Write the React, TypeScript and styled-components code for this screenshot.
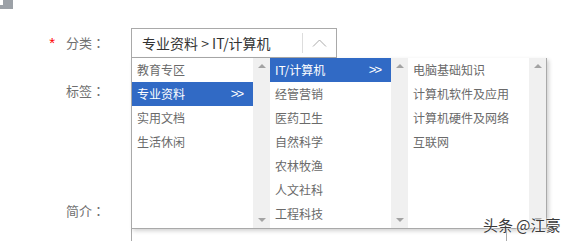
import React from "react";
import styled, { createGlobalStyle } from "styled-components";

const Global = createGlobalStyle`
  html, body { margin: 0; padding: 0; background: #fff; }
  body { font-family: "Noto Sans CJK SC", "Liberation Sans", sans-serif; overflow: hidden; }
  * { box-sizing: border-box; }
`;

const Page = styled.div`
  position: relative;
  width: 564px;
  height: 241px;
  overflow: hidden;
`;

const Header = styled.div`
  height: 9px;
  display: flex;
`;

const Form = styled.div`
  display: flex;
  flex-direction: column;
  gap: 18px;
  margin-top: 19px;
`;

const Row = styled.div`
  display: flex;
  align-items: center;
`;

const Label = styled.div`
  width: 131px;
  padding-right: 26px;
  display: flex;
  justify-content: flex-end;
  align-items: center;
  font-size: 13px;
  line-height: 16px;
  color: #6f6f6f;
`;

const Colon = styled.span`
  font-family: "Noto Sans CJK JP", sans-serif;
`;

const Star = styled.span`
  color: #f00;
  font-family: "Liberation Sans", sans-serif;
  font-size: 15px;
  margin-right: 11px;
  line-height: 16px;
`;

const Field = styled.div`
  position: relative;
`;

const SelectBox = styled.div`
  width: 206px;
  height: 30px;
  border: 1px solid #a9a9a9;
  display: flex;
  align-items: center;
  background: #fff;
`;

const SelectText = styled.div`
  flex: 1;
  padding-left: 10px;
  font-size: 14px;
  color: #333;
  line-height: 18px;
  white-space: nowrap;
`;

const Divider = styled.div`
  width: 1px;
  height: 20px;
  background: #ddd;
`;

const Chevron = styled.div`
  width: 33px;
  display: flex;
  justify-content: center;
  align-items: center;
`;

const Dropdown = styled.div`
  position: absolute;
  left: 0;
  top: 100%;
  z-index: 5;
  display: flex;
  width: 416px;
  height: 171px;
  background: #fff;
  border: 1px solid #a9a9a9;
  border-top: none;
  box-shadow: 2px 2px 4px rgba(0, 0, 0, 0.18);
`;

const Column = styled.div`
  width: 138px;
  display: flex;
`;

const List = styled.div`
  width: 121px;
  display: flex;
  flex-direction: column;
`;

const Item = styled.div<{ $active?: boolean }>`
  height: 24px;
  padding: 0 9px 0 5px;
  display: flex;
  align-items: center;
  justify-content: space-between;
  font-size: 12px;
  line-height: 16px;
  white-space: nowrap;
  color: ${(p) => (p.$active ? "#fff" : "#6a6a6a")};
  background: ${(p) => (p.$active ? "#316ac5" : "transparent")};
`;

const Arrows = styled.span`
  font-family: "Liberation Sans", sans-serif;
  font-size: 13px;
  letter-spacing: -2px;
  padding-right: 2px;
`;

const Scrollbar = styled.div`
  width: 17px;
  background: #f0f0f0;
  display: flex;
  flex-direction: column;
  justify-content: space-between;
  align-items: center;
  padding: 6px 0 6px;
`;

const Tri = styled.div<{ $down?: boolean }>`
  width: 0;
  height: 0;
  border-left: 4px solid transparent;
  border-right: 4px solid transparent;
  ${(p) =>
    p.$down
      ? "border-top: 4px solid #a3a3a3;"
      : "border-bottom: 4px solid #a3a3a3;"}
`;

const Input = styled.div`
  width: 376px;
  height: 30px;
  border: 1px solid #a9a9a9;
`;

const TextArea = styled.div`
  width: 376px;
  height: 174px;
  border: 1px solid #a9a9a9;
`;

const Watermark = styled.div`
  position: absolute;
  left: 483px;
  top: 215px;
  font-size: 15px;
  line-height: 20px;
  color: #3a3a3a;
  white-space: nowrap;
  text-shadow: 0 0 2px #fff, 0 0 2px #fff;
  z-index: 10;
`;

type Col = { items: string[]; active?: number };

const columns: Col[] = [
  { items: ["教育专区", "专业资料", "实用文档", "生活休闲"], active: 1 },
  {
    items: ["IT/计算机", "经管营销", "医药卫生", "自然科学", "农林牧渔", "人文社科", "工程科技"],
    active: 0,
  },
  { items: ["电脑基础知识", "计算机软件及应用", "计算机硬件及网络", "互联网"] },
];

export default function App() {
  return (
    <Page>
      <Global />
      <Header>
        <svg width="13" height="9" viewBox="0 0 13 9">
          <rect x="0" y="0" width="13" height="9" fill="#9ca1a7" />
          <rect x="0" y="0" width="3" height="5" fill="#fff" />
        </svg>
      </Header>
      <Form>
        <Row>
          <Label>
            <Star>*</Star>分类<Colon>：</Colon>
          </Label>
          <Field>
            <SelectBox>
              <SelectText>专业资料 &gt; IT/计算机</SelectText>
              <Divider />
              <Chevron>
                <svg width="15" height="8" viewBox="0 0 15 8">
                  <polyline points="1,7.5 7.5,1 14,7.5" fill="none" stroke="#aaa" strokeWidth="1" />
                </svg>
              </Chevron>
            </SelectBox>
            <Dropdown>
              {columns.map((c, ci) => (
                <Column key={ci}>
                  <List>
                    {c.items.map((t, i) => (
                      <Item key={t} $active={c.active === i}>
                        <span>{t}</span>
                        {c.active === i && <Arrows>&gt;&gt;</Arrows>}
                      </Item>
                    ))}
                  </List>
                  <Scrollbar>
                    <Tri />
                    <Tri $down />
                  </Scrollbar>
                </Column>
              ))}
            </Dropdown>
          </Field>
        </Row>
        <Row>
          <Label>
            标签<Colon>：</Colon>
          </Label>
          <Input />
        </Row>
        <Row>
          <Label>
            简介<Colon>：</Colon>
          </Label>
          <TextArea />
        </Row>
      </Form>
      <Watermark>头条 @江豪</Watermark>
    </Page>
  );
}
